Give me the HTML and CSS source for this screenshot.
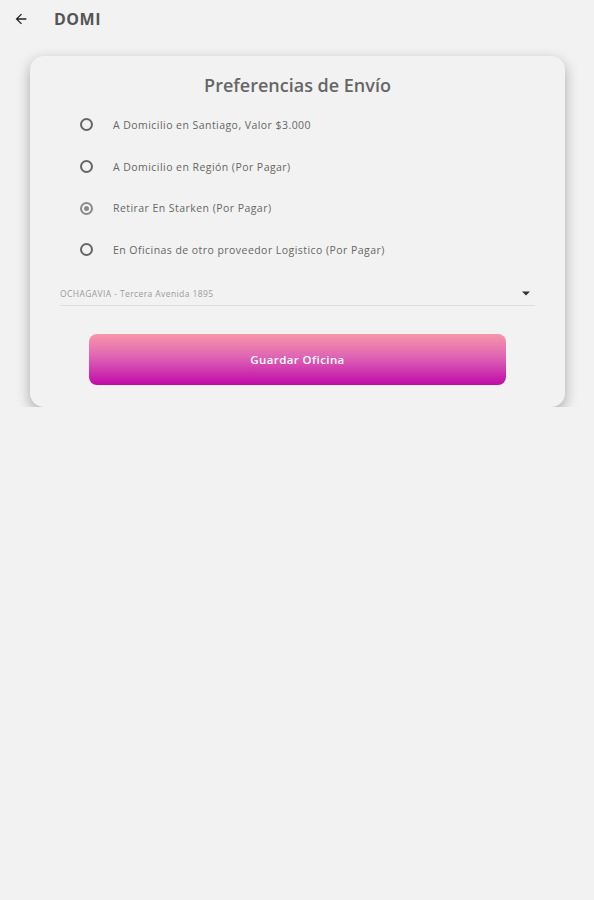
FILE: index.html
```html
<!DOCTYPE html>
<html lang="es">
<head>
    <meta charset="UTF-8">
    <meta name="viewport" content="width=device-width, initial-scale=1.0">
    <title>DOMI - Preferencias de Envío</title>
    <link rel="stylesheet" href="styles.css">
</head>
<body>
    <header class="top-bar">
        <svg class="back-icon" width="16" height="16" viewBox="0 0 24 24">
            <path d="M20 11H7.83l5.59-5.59L12 4l-8 8 8 8 1.41-1.41L7.83 13H20v-2z" fill="#222"/>
        </svg>
        <span class="brand">DOMI</span>
    </header>

    <div class="card">
        <h1 class="card-title">Preferencias de Envío</h1>

        <div class="options">
            <label class="option">
                <span class="radio"></span>
                <span class="option-text">A Domicilio en Santiago, Valor $3.000</span>
            </label>
            <label class="option">
                <span class="radio"></span>
                <span class="option-text">A Domicilio en Región (Por Pagar)</span>
            </label>
            <label class="option">
                <span class="radio checked"></span>
                <span class="option-text">Retirar En Starken (Por Pagar)</span>
            </label>
            <label class="option">
                <span class="radio"></span>
                <span class="option-text">En Oficinas de otro proveedor Logistico (Por Pagar)</span>
            </label>
        </div>

        <div class="select">
            <span class="select-text">OCHAGAVIA - Tercera Avenida 1895</span>
            <svg class="select-arrow" width="8" height="5" viewBox="0 0 10 5">
                <path d="M0 0l5 5 5-5z" fill="#333"/>
            </svg>
        </div>

        <button class="save-btn">Guardar Oficina</button>
    </div>
</body>
</html>
```

FILE: styles.css
```css
body {
    margin: 0;
    background-color: #f2f2f2;
    font-family: "Open Sans", "Liberation Sans", sans-serif;
    color: #555;
}
.top-bar {
    height: 37px;
    display: flex;
    align-items: center;
    padding-left: 13px;
}
.back-icon {
    margin-right: 25px;
}
.brand {
    font-weight: 700;
    font-size: 16px;
    letter-spacing: 0.5px;
    color: #555;
}
.card {
    margin: 19px 29px 0 30px;
    background-color: #f2f2f2;
    border-radius: 14px;
    box-shadow: 0 5px 14px rgba(0, 0, 0, 0.3);
    padding: 17px 30px 22px 30px;
    display: flex;
    flex-direction: column;
}
.card-title {
    margin: 0;
    text-align: center;
    font-size: 18px;
    font-weight: 600;
    color: #666;
    line-height: 24px;
}
.options {
    display: flex;
    flex-direction: column;
    margin-top: 7px;
    padding-left: 20px;
}
.option {
    height: 41.7px;
    display: flex;
    align-items: center;
}
.radio {
    width: 9px;
    height: 9px;
    border: 2px solid #666;
    border-radius: 50%;
    margin-right: 20px;
    display: flex;
    align-items: center;
    justify-content: center;
}
.radio.checked {
    border-color: #8a8a8a;
}
.radio.checked::after {
    content: "";
    width: 5px;
    height: 5px;
    border-radius: 50%;
    background-color: #8a8a8a;
}
.option-text {
    font-size: 10.5px;
    color: #666;
    letter-spacing: 0.45px;
}
.select {
    margin-top: 12px;
    height: 22px;
    display: flex;
    align-items: center;
    justify-content: space-between;
    border-bottom: 1px solid #ddd;
    padding-right: 5px;
}
.select-text {
    font-size: 8.5px;
    letter-spacing: 0.4px;
    color: #9a9a9a;
}
.save-btn {
    margin: 28px 29px 0 29px;
    height: 51px;
    border: none;
    border-radius: 8px;
    background: linear-gradient(to bottom, #f896a8, #de64b4 45%, #c00aa9);
    color: #fff;
    font-family: "Open Sans", sans-serif;
    font-size: 11.5px;
    font-weight: 600;
    letter-spacing: 0.4px;
    cursor: pointer;
}
```
